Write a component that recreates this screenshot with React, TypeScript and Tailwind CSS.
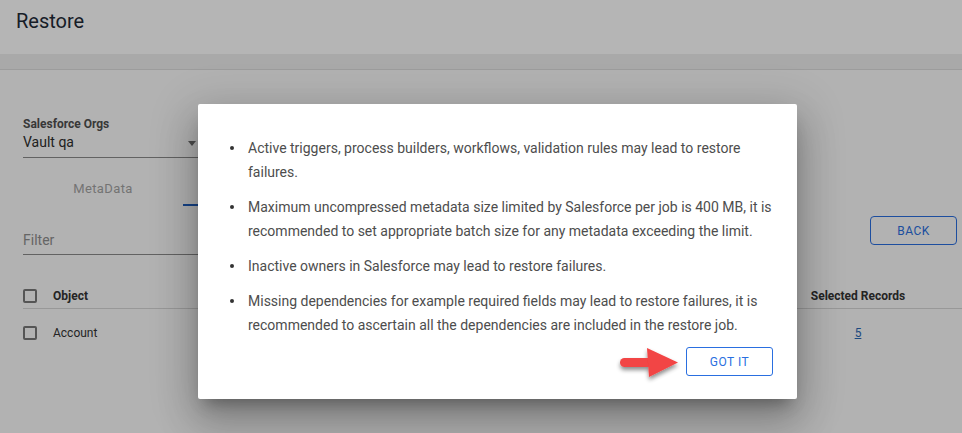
import React from "react";

function Checkbox() {
  return <div className="w-[14px] h-[14px] shrink-0 border-2 border-[#787878] rounded-[2px]" />;
}

const items: string[][] = [
  ["Active triggers, process builders, workflows, validation rules may lead to restore", "failures."],
  [
    "Maximum uncompressed metadata size limited by Salesforce per job is 400 MB, it is",
    "recommended to set appropriate batch size for any metadata exceeding the limit.",
  ],
  ["Inactive owners in Salesforce may lead to restore failures."],
  [
    "Missing dependencies for example required fields may lead to restore failures, it is",
    "recommended to ascertain all the dependencies are included in the restore job.",
  ],
];

export default function App() {
  return (
    <div className="relative w-[962px] h-[433px] overflow-hidden bg-white font-['Roboto','Liberation_Sans',sans-serif]">
      {/* Header */}
      <div className="h-[54px] px-4 pt-[8px]">
        <h1 className="text-[20px] leading-[26px] text-[#1f2b38]">Restore</h1>
      </div>
      <div className="h-4 bg-[#eeeeee] border-b border-[#dcdcdc]" />

      {/* Body */}
      <div className="h-[363px] bg-[#fbfbfb] pl-[23px] pt-[46px]">
        <div className="text-[12px] leading-[16px] font-bold text-[#505050]">Salesforce Orgs</div>
        <div className="w-[180px] flex items-center justify-between pb-[5px] border-b border-[#8a8a8a]">
          <span className="text-[14px] leading-[20px] text-[#2e2e2e]">Vault qa</span>
          <svg width="8" height="5" viewBox="0 0 8 5" className="mr-[7px] mt-[2px]">
            <path d="M0 0 L8 0 L4 5 Z" fill="#6e6e6e" />
          </svg>
        </div>

        {/* Tabs */}
        <div className="flex h-[48px]">
          <div className="relative w-[160px] flex justify-center pt-[23px]">
            <span className="text-[13px] leading-[16px] tracking-[0.4px] text-[#a3a3a3]">MetaData</span>
          </div>
          <div className="relative w-[160px] flex justify-center pt-[23px]">
            <span className="text-[13px] leading-[16px] tracking-[0.4px] text-[#1f5fb5]">Data</span>
            <div className="absolute left-0 right-0 bottom-0 h-[2px] bg-[#1f5fc0]" />
          </div>
        </div>

        {/* Filter row */}
        <div className="flex items-start justify-between">
          <div className="w-[430px] pt-[24px] pb-[4px] border-b border-[#8a8a8a]">
            <span className="block text-[14px] leading-[20px] text-[#8f8f8f]">Filter</span>
          </div>
          <button className="mt-[10px] mr-[5px] w-[87px] h-[29px] rounded-[4px] border border-[#2a6fe0] text-[12px] tracking-[0.5px] text-[#2a6fe0]">
            BACK
          </button>
        </div>

        {/* Table */}
        <div className="mt-[29px]">
          <div className="flex items-center h-[25px] border-b border-[#d6d6d6]">
            <Checkbox />
            <span className="ml-4 text-[12px] font-bold text-[#333]">Object</span>
            <span className="ml-auto w-[208px] text-center text-[12px] font-bold text-[#333]">Selected Records</span>
          </div>
          <div className="flex items-center h-[48px]">
            <Checkbox />
            <span className="ml-4 text-[12px] text-[#333]">Account</span>
            <span className="ml-auto w-[208px] text-center text-[12px] text-[#2a68b4] underline">5</span>
          </div>
        </div>
      </div>

      {/* Backdrop */}
      <div className="absolute inset-0 bg-black/[0.29]" />

      {/* Modal */}
      <div className="absolute left-[198px] top-[104px] w-[599px] h-[295px] bg-white rounded-[2px] shadow-[0px_11px_15px_-7px_rgba(0,0,0,0.3),0px_24px_38px_3px_rgba(0,0,0,0.18),0px_9px_46px_8px_rgba(0,0,0,0.14)] pt-[32px] pl-[32px] pr-[24px] flex flex-col">
        <div className="flex flex-col gap-[11px]">
          {items.map((lines, i) => (
            <div key={i} className="flex items-start">
              <span className="mt-[10px] w-[4px] h-[4px] rounded-full bg-[#333] shrink-0" />
              <div className="ml-[14px] text-[14px] leading-[24px] text-[#4d4d4d] whitespace-nowrap">
                {lines.map((l, j) => (
                  <div key={j}>{l}</div>
                ))}
              </div>
            </div>
          ))}
        </div>
        <div className="mt-[10px] flex justify-end">
          <button className="w-[87px] h-[29px] rounded-[3px] border border-[#2a6fe0] text-[12px] tracking-[0.5px] text-[#2a6fe0]">
            GOT IT
          </button>
        </div>
      </div>

      {/* Red arrow */}
      <svg
        className="absolute left-[616px] top-[344px]"
        width="72"
        height="46"
        viewBox="0 0 72 46"
      >
        <defs>
          <filter id="sh" x="-20%" y="-20%" width="150%" height="160%">
            <feDropShadow dx="0" dy="3" stdDeviation="2.2" floodColor="#000" floodOpacity="0.45" />
          </filter>
        </defs>
        <g filter="url(#sh)">
          <path d="M8.5 14 L35 14 L35 23 L8.5 23 A4.5 4.5 0 0 1 8.5 14 Z" fill="#f24444" />
          <path d="M31 4 L62 18.5 L33 33 Z" fill="#f24444" />
        </g>
      </svg>
    </div>
  );
}
